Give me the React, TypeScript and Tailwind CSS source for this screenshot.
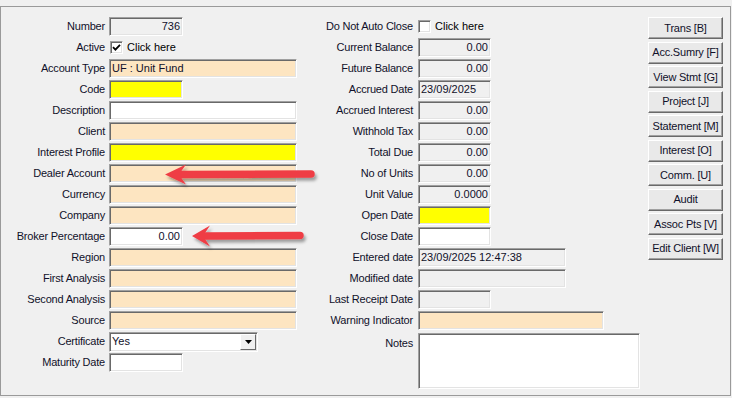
import { ReactNode } from 'react';

const sunken =
    'border border-t-[#a0a0a0] border-l-[#a0a0a0] border-r-white border-b-white shadow-[inset_1px_1px_0_#696969,inset_-1px_-1px_0_#e3e3e3]';

interface FieldProps {
    w?: string;
    bg?: string;
    right?: boolean;
    children?: ReactNode;
}

function Field({ w = 'w-[188px]', bg = 'bg-[#fde5c1]', right = false, children }: FieldProps) {
    return (
        <div
            className={`${w} ${bg} ${sunken} flex h-[19px] items-center overflow-hidden px-[2px] text-[11px] leading-none text-[#10102a] ${right ? 'justify-end' : 'justify-start'}`}
        >
            {children}
        </div>
    );
}

function Check({ checked }: { checked?: boolean }) {
    return (
        <div className="flex items-center gap-[4px]">
            <div className={`${sunken} flex h-[13px] w-[13px] items-center justify-center bg-white`}>
                {checked && (
                    <svg width="9" height="9" viewBox="0 0 9 9">
                        <path d="M1 4.2 L3.4 6.6 L8 1.8" fill="none" stroke="#000" strokeWidth="1.8" />
                    </svg>
                )}
            </div>
            <span className="text-[11px] text-black">Click here</span>
        </div>
    );
}

function Row({ label, labelW, gap, children }: { label: string; labelW: string; gap: string; children: ReactNode }) {
    return (
        <div className={`flex h-[19px] items-center ${gap}`}>
            <div className={`${labelW} shrink-0 pb-[1px] text-right text-[11px] leading-none tracking-[-0.2px] text-[#10102a]`}>{label}</div>
            {children}
        </div>
    );
}

const buttons = [
    'Trans [B]',
    'Acc.Sumry [F]',
    'View Stmt [G]',
    'Project [J]',
    'Statement [M]',
    'Interest [O]',
    'Comm. [U]',
    'Audit',
    'Assoc Pts [V]',
    'Edit Client [W]',
];

function Arrow({ tail, tip, y, len, half }: { tail: number; tip: number; y: number; len: number; half: number }) {
    const back = tip + len;
    return (
        <g filter="url(#shadow)">
            <line x1={back - 4} y1={y} x2={tail} y2={y - 0.5} stroke="#ef3e45" strokeWidth="7.5" strokeLinecap="round" />
            <polygon
                points={`${tip},${y} ${back},${y - half} ${back - 5},${y - 3} ${back - 5},${y + 3} ${back},${y + half}`}
                fill="#ef3e45"
            />
        </g>
    );
}

export default function App() {
    const leftLabel = 'w-[104px]';
    const midLabel = 'w-[116px]';

    return (
        <div
            className="relative h-[398px] w-[732px] overflow-hidden bg-[#f0f0f0] pt-[6px]"
            style={{ fontFamily: '"Liberation Sans", Arial, sans-serif' }}
        >
            <div className="flex h-[390px] w-[731px] border border-[#9a9a9a] pt-[10px]">
                {/* left column */}
                <div className="flex w-[296px] shrink-0 flex-col gap-[2px]">
                    <Row label="Number" labelW={leftLabel} gap="gap-[4px]">
                        <Field w="w-[74px]" bg="bg-[#f0f0f0]" right>
                            736
                        </Field>
                    </Row>
                    <Row label="Active" labelW={leftLabel} gap="gap-[5px]">
                        <Check checked />
                    </Row>
                    <Row label="Account Type" labelW={leftLabel} gap="gap-[4px]">
                        <Field>UF : Unit Fund</Field>
                    </Row>
                    <Row label="Code" labelW={leftLabel} gap="gap-[4px]">
                        <Field w="w-[74px]" bg="bg-[#ffff00]" />
                    </Row>
                    <Row label="Description" labelW={leftLabel} gap="gap-[4px]">
                        <Field bg="bg-white" />
                    </Row>
                    <Row label="Client" labelW={leftLabel} gap="gap-[4px]">
                        <Field />
                    </Row>
                    <Row label="Interest Profile" labelW={leftLabel} gap="gap-[4px]">
                        <Field bg="bg-[#ffff00]" />
                    </Row>
                    <Row label="Dealer Account" labelW={leftLabel} gap="gap-[4px]">
                        <Field />
                    </Row>
                    <Row label="Currency" labelW={leftLabel} gap="gap-[4px]">
                        <Field />
                    </Row>
                    <Row label="Company" labelW={leftLabel} gap="gap-[4px]">
                        <Field />
                    </Row>
                    <Row label="Broker Percentage" labelW={leftLabel} gap="gap-[4px]">
                        <Field w="w-[74px]" bg="bg-white" right>
                            0.00
                        </Field>
                    </Row>
                    <Row label="Region" labelW={leftLabel} gap="gap-[4px]">
                        <Field />
                    </Row>
                    <Row label="First Analysis" labelW={leftLabel} gap="gap-[4px]">
                        <Field />
                    </Row>
                    <Row label="Second Analysis" labelW={leftLabel} gap="gap-[4px]">
                        <Field />
                    </Row>
                    <Row label="Source" labelW={leftLabel} gap="gap-[4px]">
                        <Field />
                    </Row>
                    <Row label="Certificate" labelW={leftLabel} gap="gap-[4px]">
                        <div className={`${sunken} flex h-[20px] w-[149px] items-center justify-between bg-white pl-[2px] pr-[1px] text-[11px] text-[#10102a]`}>
                            <span>Yes</span>
                            <div className="flex h-[16px] w-[16px] items-center justify-center border border-t-white border-l-white border-r-[#696969] border-b-[#696969] bg-[#f0f0f0]">
                                <svg width="7" height="4" viewBox="0 0 7 4">
                                    <path d="M0 0 H7 L3.5 4 Z" fill="#000" />
                                </svg>
                            </div>
                        </div>
                    </Row>
                    <Row label="Maturity Date" labelW={leftLabel} gap="gap-[4px]">
                        <Field w="w-[74px]" bg="bg-white" />
                    </Row>
                </div>

                {/* middle column */}
                <div className="flex w-[343px] shrink-0 flex-col gap-[2px]">
                    <Row label="Do Not Auto Close" labelW={midLabel} gap="gap-[5px]">
                        <Check />
                    </Row>
                    {[
                        ['Current Balance', '0.00'],
                        ['Future Balance', '0.00'],
                    ].map(([l, v]) => (
                        <Row key={l} label={l} labelW={midLabel} gap="gap-[5px]">
                            <Field w="w-[73px]" bg="bg-[#f0f0f0]" right>
                                {v}
                            </Field>
                        </Row>
                    ))}
                    <Row label="Accrued Date" labelW={midLabel} gap="gap-[5px]">
                        <Field w="w-[73px]" bg="bg-[#f0f0f0]">
                            23/09/2025
                        </Field>
                    </Row>
                    {[
                        ['Accrued Interest', '0.00'],
                        ['Withhold Tax', '0.00'],
                        ['Total Due', '0.00'],
                        ['No of Units', '0.00'],
                        ['Unit Value', '0.0000'],
                    ].map(([l, v]) => (
                        <Row key={l} label={l} labelW={midLabel} gap="gap-[5px]">
                            <Field w="w-[73px]" bg="bg-[#f0f0f0]" right>
                                {v}
                            </Field>
                        </Row>
                    ))}
                    <Row label="Open Date" labelW={midLabel} gap="gap-[5px]">
                        <Field w="w-[73px]" bg="bg-[#ffff00]" />
                    </Row>
                    <Row label="Close Date" labelW={midLabel} gap="gap-[5px]">
                        <Field w="w-[73px]" bg="bg-white" />
                    </Row>
                    <Row label="Entered date" labelW={midLabel} gap="gap-[5px]">
                        <Field w="w-[148px]" bg="bg-[#f0f0f0]">
                            23/09/2025 12:47:38
                        </Field>
                    </Row>
                    <Row label="Modified date" labelW={midLabel} gap="gap-[5px]">
                        <Field w="w-[148px]" bg="bg-[#f0f0f0]" />
                    </Row>
                    <Row label="Last Receipt Date" labelW={midLabel} gap="gap-[5px]">
                        <Field w="w-[73px]" bg="bg-[#f0f0f0]" />
                    </Row>
                    <Row label="Warning Indicator" labelW={midLabel} gap="gap-[5px]">
                        <Field w="w-[186px]" />
                    </Row>
                    <div className="mt-[1px] flex items-start gap-[5px]">
                        <div className={`${midLabel} shrink-0 pt-[5px] text-right text-[11px] leading-none tracking-[-0.2px] text-[#10102a]`}>Notes</div>
                        <div className={`${sunken} h-[56px] w-[222px] bg-white`} />
                    </div>
                </div>

                {/* buttons */}
                <div className="ml-[8px] flex w-[75px] shrink-0 flex-col gap-[2.5px]">
                    {buttons.map((b) => (
                        <div
                            key={b}
                            className="flex h-[22px] items-center justify-center border border-t-white border-l-white border-r-[#696969] border-b-[#696969] bg-[#e9e9e9] text-[11px] tracking-[-0.2px] text-[#10102a] shadow-[inset_-1px_-1px_0_#a0a0a0]"
                        >
                            {b}
                        </div>
                    ))}
                </div>
            </div>

            <svg className="pointer-events-none absolute left-0 top-0" width="732" height="398" viewBox="0 0 732 398">
                <defs>
                    <filter id="shadow" x="-10%" y="-50%" width="120%" height="200%">
                        <feDropShadow dx="2" dy="3" stdDeviation="1.8" floodColor="#000" floodOpacity="0.35" />
                    </filter>
                </defs>
                <Arrow tip={165} tail={311} y={174.5} len={21} half={10} />
                <Arrow tip={192} tail={300} y={236} len={18} half={10.5} />
            </svg>
        </div>
    );
}
